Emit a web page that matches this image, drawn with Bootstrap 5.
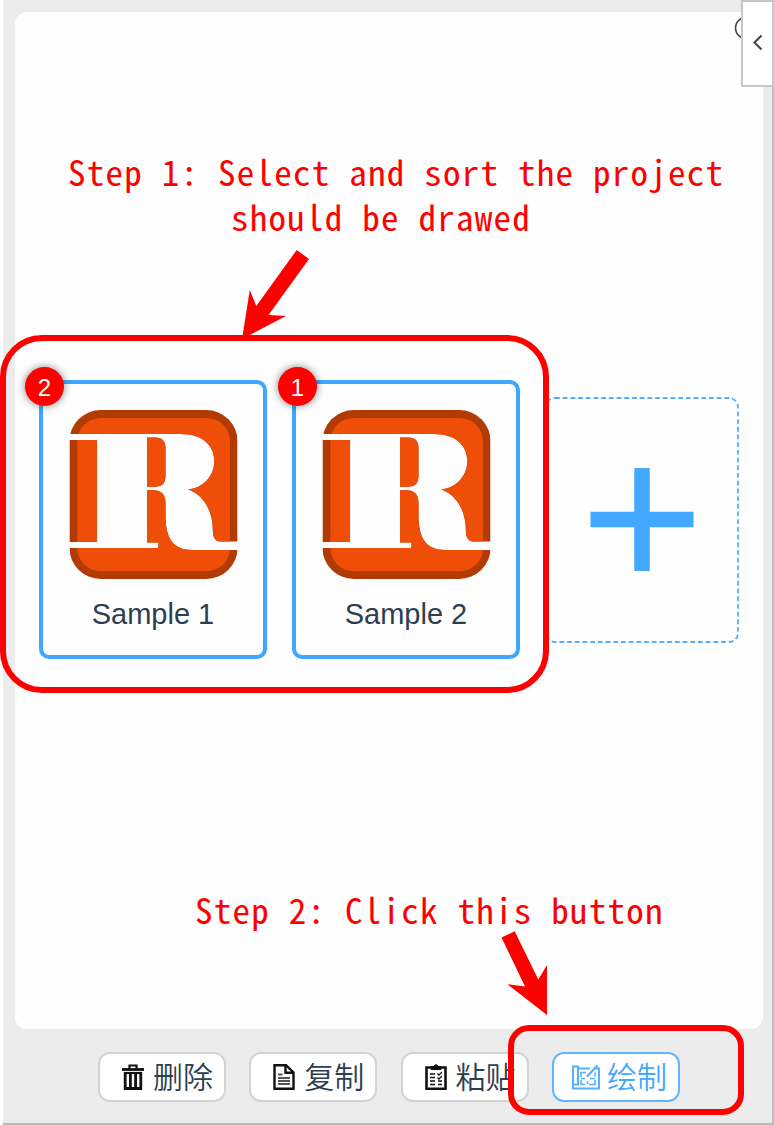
<!DOCTYPE html>
<html lang="zh-CN">
<head>
<meta charset="utf-8">
<meta name="viewport" content="width=device-width, initial-scale=1">
<title>Projects</title>
<link href="https://cdn.jsdelivr.net/npm/bootstrap@5.3.0/dist/css/bootstrap.min.css" rel="stylesheet">
<style>
  body { background: #fff; font-family: "Liberation Sans", "Noto Sans CJK SC", sans-serif; color: #2c3e50; overflow: hidden; }
  .app { width: 771px; height: 1125px; margin-left: 3px; background: #ececec; border-right: 2px solid #bdbdbd; border-bottom: 2px solid #b8b8b8; padding: 12px 9px 0 12px; }
  .stage { height: 1017px; background: #fefefe; border-radius: 12px; }
  .note { font-family: "Noto Sans CJK SC", "DejaVu Sans Mono", monospace; font-feature-settings: "hwid"; font-size: 35px; letter-spacing: 1.25px; line-height: 45px; color: #f00; white-space: pre; }
  .note-one { padding: 136px 0 0 53px; height: 368px; }
  .note-one div { padding-left: 163px; }
  .note-two { padding: 0 0 0 180px; margin-top: 227px; }
  .tiles { padding-left: 24px; gap: 25px; height: 279px; }
  .tile { width: 228px; height: 279px; border: 4px solid #3fa7ff; border-radius: 10px; padding-top: 26px; }
  .tile svg { width: 169px; height: 169px; }
  .tile-name { font-size: 29px; line-height: 34px; margin-top: 18px; }
  .num { position: absolute; left: -18px; top: -17px; width: 39px; height: 39px; border-radius: 50%; background: #f00; color: #fff; font-size: 24px; line-height: 39px; box-shadow: 0 0 6px 2px rgba(0,0,0,.3); padding-top: 1px; }
  .tile-add { width: 194px; height: 246px; }
  .tools { padding: 23px 0 0 83px; gap: 23.3px; }
  .tool { width: 128px; height: 50px; background: #fff; border: 2px solid #d2d4d3; border-radius: 12px; padding: 0 0 0 22px; gap: 9px; font-size: 30px; line-height: 42px; color: #2c3e50; font-weight: 350; font-family: "Noto Sans CJK SC", sans-serif; white-space: nowrap; }
  .tool span { margin-top: -4px; }
  .tool svg { flex: none; color: #111; }
  .tool-on { border-color: #62b5ff; color: #45a8ff; padding-left: 18px; gap: 7px; }
  .tool-on svg { color: #55b0ff; }
  .drawer { position: absolute; right: 0; top: 0; width: 33px; height: 87px; background: #fff; border: 2px solid #c6c6c6; padding-bottom: 2px; }
  .ring { position: absolute; border: 6px solid #f00; }
  .ring-one { left: 0; top: 335px; width: 549px; height: 358px; border-radius: 42px; }
  .ring-two { left: 508px; top: 1025px; width: 236px; height: 90px; border-radius: 21px; }
  .overlay { position: absolute; left: 0; top: 0; pointer-events: none; }
</style>
</head>
<body class="position-relative">
<svg width="0" height="0" class="position-absolute" aria-hidden="true">
  <defs>
    <clipPath id="panes">
      <path d="M27 102H360C425 102 461 135 461 183C461 230 425 265 383 268C425 283 457 325 457 395C457 415 468 424 480 424H531V30H27Z"/>
      <path d="M27 120H110V425H27Z"/>
      <path d="M260 112H285Q315 112 315 145V228Q315 260 285 260H260Z"/>
      <path d="M260 270H280Q315 270 315 310V345C315 420 342 449 395 449H531V536H27V443H290Q294 443 294 438V427H260Z"/>
    </clipPath>
    <symbol id="logo" viewBox="27 30 504 506">
      <g clip-path="url(#panes)">
        <rect x="27" y="30" width="504" height="506" rx="94" fill="#b23b04"/>
        <rect x="51" y="54" width="457" height="459" rx="70" fill="#ef4e09"/>
      </g>
    </symbol>
  </defs>
</svg>

<main class="app">
  <section class="stage">
    <div class="note note-one">Step 1: Select and sort the project<div>should be drawed</div></div>
    <div class="tiles d-flex align-items-center">
      <article class="tile position-relative text-center">
        <span class="num">2</span>
        <svg class="d-block mx-auto"><use href="#logo"/></svg>
        <div class="tile-name">Sample 1</div>
      </article>
      <article class="tile position-relative text-center">
        <span class="num">1</span>
        <svg class="d-block mx-auto"><use href="#logo"/></svg>
        <div class="tile-name">Sample 2</div>
      </article>
      <svg class="tile-add" viewBox="0 0 194 246">
        <rect x="1" y="1" width="192" height="244" rx="9" fill="none" stroke="#53b0ff" stroke-width="1.8" stroke-dasharray="4.8 2.9"/>
        <path d="M45.500 122.500H148.500M97 71V174" stroke="#43a8ff" stroke-width="15.500"/>
      </svg>
    </div>
    <div class="note note-two">Step 2: Click this button</div>
  </section>
  <div class="tools d-flex">
    <button class="tool btn d-flex align-items-center">
      <svg width="22" height="26" viewBox="0 0 22 26" fill="none" stroke="currentColor"><path d="M0 5.500H22" stroke-width="2.800"/><path d="M7.500 5V1.500H14.500V5" stroke-width="2.200"/><path d="M3.200 8V24.500H18.800V8M8.400 8V24M13.600 8V24" stroke-width="2.800"/><path d="M2 9H20" stroke-width="2.200"/></svg>
      <span>删除</span>
    </button>
    <button class="tool btn d-flex align-items-center">
      <svg width="22" height="26" viewBox="0 0 22 26" fill="none" stroke="currentColor"><path d="M1.500 1.200H13L20.500 8.500V24.800H1.500Z" stroke-width="2.400"/><path d="M12.500 1.500V8.800H20" stroke-width="2.400"/><path d="M5 10.500H9.500M5 14H17M5 17H17M5 20H17" stroke="#555" stroke-width="2"/></svg>
      <span>复制</span>
    </button>
    <button class="tool btn d-flex align-items-center">
      <svg width="22" height="26" viewBox="0 0 22 26" fill="none" stroke="currentColor"><path d="M1.500 3.500H20.500V24.800H1.500Z" stroke-width="2.600"/><path d="M6 5.500V2.500H8.500Q11-1 13.500 2.500H16V5.500Z" fill="currentColor"/><path d="M5 10H10M5 13.500H10M5 17H10M5 20.500H10M13 20.500H17M13 17H17" stroke-width="1.500"/><path d="M12.500 9.500L14 11L17 8M12.500 13.500L14 15L17 12" stroke-width="1.300"/></svg>
      <span>粘贴</span>
    </button>
    <button class="tool tool-on btn d-flex align-items-center">
      <svg width="28" height="26" viewBox="0 0 28 26" fill="none" stroke="currentColor" stroke-width="2"><path d="M1 2.500H6V20.500H1ZM1 20.500V24.500H27V4.500H24M6 4.500H18M6 20.500H3"/><path d="M25.500 1.500L15 12.500" stroke-width="2.400"/><path d="M14 8.500H9V13M9 16V20.500H13M17 20.500H23V16M23 12.500V8.500M9 14.500H13M18 14.500H23M15.500 17V20" stroke-width="1.600"/></svg>
      <span>绘制</span>
    </button>
  </div>
</main>

<svg class="overlay" width="774" height="1125" aria-hidden="true">
  <circle cx="746" cy="28" r="10.500" fill="none" stroke="#444" stroke-width="1.500"/>
</svg>
<aside class="drawer d-flex align-items-center justify-content-center">
  <svg width="11" height="17" viewBox="0 0 11 17" fill="none" stroke="#4a4a4a" stroke-width="2.200"><path d="M9.500 1.500L2.500 8.500L9.500 15.500"/></svg>
</aside>
<div class="ring ring-one"></div>
<div class="ring ring-two"></div>
<svg class="overlay" width="774" height="1125" fill="#f00" aria-hidden="true">
  <path d="M296.700 250L309 259L268.500 315L286 316L242 339L249.800 290L256.300 306Z"/>
  <path d="M514.700 931.300L501.500 937.500L525 986.500L507.500 984.300L547 1015V965L538.300 979.500Z"/>
</svg>
<script src="https://cdn.jsdelivr.net/npm/bootstrap@5.3.0/dist/js/bootstrap.bundle.min.js"></script>
</body>
</html>
